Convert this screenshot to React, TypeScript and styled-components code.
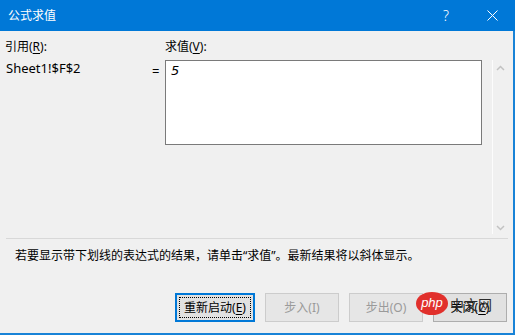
import styled, { createGlobalStyle } from 'styled-components';

const GlobalStyle = createGlobalStyle`
  html, body {
    margin: 0;
    padding: 0;
    background: #ffffff;
  }
  * {
    box-sizing: border-box;
  }
`;

const Window = styled.div`
  position: relative;
  width: 515px;
  height: 336px;
  display: flex;
  flex-direction: column;
  font-family: "Noto Sans", "Noto Sans CJK SC", sans-serif;
  font-size: 12px;
  color: #000;
  overflow: hidden;
`;

const TitleBar = styled.div`
  height: 31px;
  flex: none;
  background: #0078d7;
  color: #fff;
  display: flex;
  align-items: center;
  padding-left: 8px;
`;

const Title = styled.span`
  flex: 1;
  font-size: 12px;
  line-height: 16px;
`;

const TitleButton = styled.span`
  width: 46px;
  height: 31px;
  display: flex;
  align-items: center;
  justify-content: center;
  font-size: 14px;
  font-weight: 300;
`;

const Body = styled.div`
  flex: 1;
  background: #f0f0f0;
  border-right: 2px solid #1883d7;
  border-bottom: 2px solid #1883d7;
  display: flex;
  flex-direction: column;
  padding: 8px 0 0 5px;
  margin-bottom: 1px;
`;

const EvalGrid = styled.div`
  display: grid;
  grid-template-columns: 145px 15px 317px 10px 15px;
  grid-template-rows: 16px 174px;
  row-gap: 5px;
`;

const Label = styled.div<{ $col: number }>`
  grid-column: ${(p) => p.$col};
  line-height: 16px;
  white-space: nowrap;
`;

const Key = styled.u`
  text-underline-offset: 2px;
`;

const RefText = styled.div`
  grid-column: 1;
  grid-row: 2;
  font-size: 13px;
  line-height: 16px;
  padding-left: 1px;
`;

const Equals = styled.div`
  grid-column: 2;
  grid-row: 2;
  font-size: 13px;
  line-height: 16px;
  padding: 3px 0 0 2px;
`;

const ValueBox = styled.div`
  grid-column: 3;
  grid-row: 2;
  align-self: start;
  height: 85px;
  background: #fff;
  border: 1px solid #7a7a7a;
  padding: 1px 0 0 5px;
`;

const Value = styled.span`
  font-family: "DejaVu Sans", "Liberation Sans", sans-serif;
  font-style: italic;
  font-size: 13px;
  line-height: 16px;
`;

const ScrollBar = styled.div`
  grid-column: 5;
  grid-row: 2;
  border-left: 1px solid #fcfcfc;
  display: flex;
  flex-direction: column;
  justify-content: space-between;
  align-items: center;
  padding: 5px 0 3px 0;
`;

const Separator = styled.div`
  height: 1px;
  background: #d8d8d8;
  margin: 4px 5px 0 1px;
`;

const Hint = styled.div`
  line-height: 16px;
  margin: 9px 0 0 10px;
  white-space: nowrap;
`;

const ButtonRow = styled.div`
  display: flex;
  justify-content: flex-end;
  gap: 10px;
  margin-top: 29px;
  padding-right: 6px;
`;

const Button = styled.div<{ $default?: boolean; $disabled?: boolean; $width: number }>`
  width: ${(p) => p.$width}px;
  height: 29px;
  display: flex;
  align-items: center;
  justify-content: center;
  background: ${(p) => (p.$disabled ? '#e6e6e6' : '#e1e1e1')};
  border: ${(p) => (p.$default ? '2px solid #0078d7' : p.$disabled ? '1px solid #cccccc' : '1px solid #adadad')};
  color: ${(p) => (p.$disabled ? '#9a9a9a' : '#000')};
  line-height: 16px;
  padding: ${(p) => (p.$default ? '2px' : '3px')};
`;

const Focus = styled.span`
  width: 100%;
  height: 100%;
  border: 1px dotted #000;
  display: flex;
  align-items: center;
  justify-content: center;
`;

const Watermark = styled.div`
  position: absolute;
  left: 416px;
  top: 292px;
  display: flex;
  align-items: center;
  gap: 2px;
  pointer-events: none;
`;

const PhpBadge = styled.span`
  width: 32px;
  height: 23px;
  border-radius: 50%;
  background: #e1302c;
  color: #fff;
  font-family: "Liberation Sans", sans-serif;
  font-style: italic;
  font-size: 13px;
  display: flex;
  align-items: center;
  justify-content: center;
  padding-bottom: 3px;
`;

const WatermarkText = styled.span`
  font-family: "Noto Sans CJK SC", sans-serif;
  font-size: 14px;
  color: #2b2b2b;
`;

function Chevron({ up }: { up?: boolean }) {
  return (
    <svg width="9" height="6" viewBox="0 0 9 6">
      <path
        d={up ? 'M1 5 L4.5 1.5 L8 5' : 'M1 1 L4.5 4.5 L8 1'}
        fill="none"
        stroke="#c2c2c2"
        strokeWidth="1.5"
      />
    </svg>
  );
}

export default function App() {
  return (
    <Window>
      <GlobalStyle />
      <TitleBar>
        <Title>公式求值</Title>
        <TitleButton>?</TitleButton>
        <TitleButton>
          <svg width="11" height="11" viewBox="0 0 11 11">
            <path d="M0.5 0.5 L10.5 10.5 M10.5 0.5 L0.5 10.5" stroke="#fff" strokeWidth="1" />
          </svg>
        </TitleButton>
      </TitleBar>
      <Body>
        <EvalGrid>
          <Label $col={1}>
            引用(<Key>R</Key>):
          </Label>
          <Label $col={3}>
            求值(<Key>V</Key>):
          </Label>
          <RefText>Sheet1!$F$2</RefText>
          <Equals>=</Equals>
          <ValueBox>
            <Value>5</Value>
          </ValueBox>
          <ScrollBar>
            <Chevron up />
            <Chevron />
          </ScrollBar>
        </EvalGrid>
        <Separator />
        <Hint>若要显示带下划线的表达式的结果，请单击“求值”。最新结果将以斜体显示。</Hint>
        <ButtonRow>
          <Button $default $width={80}>
            <Focus>
              重新启动(<Key>E</Key>)
            </Focus>
          </Button>
          <Button $disabled $width={74}>
            步入(I)
          </Button>
          <Button $disabled $width={74}>
            步出(O)
          </Button>
          <Button $width={74}>
            关闭(<Key>C</Key>)
          </Button>
        </ButtonRow>
      </Body>
      <Watermark>
        <PhpBadge>php</PhpBadge>
        <WatermarkText>中文网</WatermarkText>
      </Watermark>
    </Window>
  );
}
